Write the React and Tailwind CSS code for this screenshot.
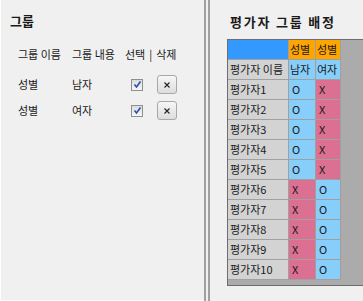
import React from 'react';

const font = { fontFamily: '"Noto Sans CJK KR", "Noto Sans", sans-serif' };

const groups = [
  { name: '성별', value: '남자' },
  { name: '성별', value: '여자' },
];

const raters = [
  ['평가자1', 'O', 'X'],
  ['평가자2', 'O', 'X'],
  ['평가자3', 'O', 'X'],
  ['평가자4', 'O', 'X'],
  ['평가자5', 'O', 'X'],
  ['평가자6', 'X', 'O'],
  ['평가자7', 'X', 'O'],
  ['평가자8', 'X', 'O'],
  ['평가자9', 'X', 'O'],
  ['평가자10', 'X', 'O'],
];

const CheckBox = () => (
  <div className="w-[12px] h-[12px] border border-[#8e8f8f] bg-gradient-to-b from-[#dcdcdc] to-[#f6f6f6] flex items-center justify-center">
    <svg width="9" height="9" viewBox="0 0 9 9">
      <path d="M1.5 4.5 L3.5 7 L7.5 1.5" fill="none" stroke="#2a4fb0" strokeWidth="1.6" />
    </svg>
  </div>
);

const DelButton = () => (
  <div className="w-[20px] h-[19px] rounded-[3px] border border-[#a8a8a8] bg-gradient-to-b from-[#f6f6f6] to-[#dddddd] flex items-center justify-center">
    <svg width="6" height="6" viewBox="0 0 6 6">
      <path d="M0.5 0.5 L5.5 5.5 M5.5 0.5 L0.5 5.5" stroke="#222" strokeWidth="1.1" />
    </svg>
  </div>
);

const cellColor = (v) => (v === 'O' ? 'bg-[#87cefa]' : 'bg-[#db7093]');

const App = () => {
  return (
    <div className="w-[363px] h-[301px] flex bg-[#f0f0f0] overflow-hidden text-[#1a1a1a]" style={font}>
      {/* left: group list */}
      <div className="w-[204px] h-full border-l border-b border-white shrink-0">
        <div className="pl-[9px] pt-[13px] text-[13px] font-bold leading-[16px]">그룹</div>
        <div className="flex mt-[18px] text-[11px] leading-[14px]">
          <div className="w-[54px] pl-[17px] box-content">그룹 이름</div>
          <div className="w-[53px]">그룹 내용</div>
          <div className="flex">
            <span>선택</span>
            <span className="mx-[4px]">|</span>
            <span>삭제</span>
          </div>
        </div>
        <div className="mt-[14px] flex flex-col gap-[7px]">
          {groups.map((g, index) => (
            <div key={index} className="flex items-center h-[19px] text-[11px]">
              <div className="w-[54px] pl-[17px] box-content">{g.name}</div>
              <div className="w-[59px]">{g.value}</div>
              <CheckBox />
              <div className="ml-[14px]">
                <DelButton />
              </div>
            </div>
          ))}
        </div>
      </div>

      <div className="w-[2px] h-full bg-[#a0a0a0] shrink-0" />
      <div className="w-[2px] h-full shrink-0" />
      <div className="w-[2px] h-full bg-[#a0a0a0] shrink-0" />

      {/* right: rater assignment grid */}
      <div className="flex-1 min-w-0">
        <div className="pl-[20px] pt-[14px] text-[13px] font-bold leading-[16px] tracking-[1.8px] whitespace-nowrap">평가자 그룹 배정</div>
        <div className="ml-[17px] mt-[9px] w-[180px] h-[247px] bg-[#ababab] border border-[#6d6d6d] text-[11px] leading-[19px]">
          <div className="flex">
            <div className="w-[61px] h-[20px] bg-[#3399ff] border-r border-b border-[#a0a0a0]" />
            <div className="w-[27px] h-[20px] bg-[#ffa500] border-r border-b border-[#a0a0a0] pl-[1px]">성별</div>
            <div className="w-[25px] h-[20px] bg-[#ffa500] border-r border-b border-[#a0a0a0] pl-[1px]">성별</div>
          </div>
          <div className="flex">
            <div className="w-[61px] h-[20px] bg-[#d3d3d3] border-r border-b border-[#a0a0a0] pl-[2px] whitespace-nowrap overflow-hidden">평가자 이름</div>
            <div className="w-[27px] h-[20px] bg-[#87cefa] border-r border-b border-[#a0a0a0] pl-[1px]">남자</div>
            <div className="w-[25px] h-[20px] bg-[#87cefa] border-r border-b border-[#a0a0a0] pl-[1px]">여자</div>
          </div>
          {raters.map((r, index) => (
            <div key={index} className="flex">
              <div className="w-[61px] h-[20px] bg-[#d3d3d3] border-r border-b border-[#a0a0a0] pl-[2px]">{r[0]}</div>
              <div className={`w-[27px] h-[20px] ${cellColor(r[1])} border-r border-b border-[#a0a0a0] pl-[3px]`}>{r[1]}</div>
              <div className={`w-[25px] h-[20px] ${cellColor(r[2])} border-r border-b border-[#a0a0a0] pl-[3px]`}>{r[2]}</div>
            </div>
          ))}
        </div>
      </div>
    </div>
  );
};

export default App;
